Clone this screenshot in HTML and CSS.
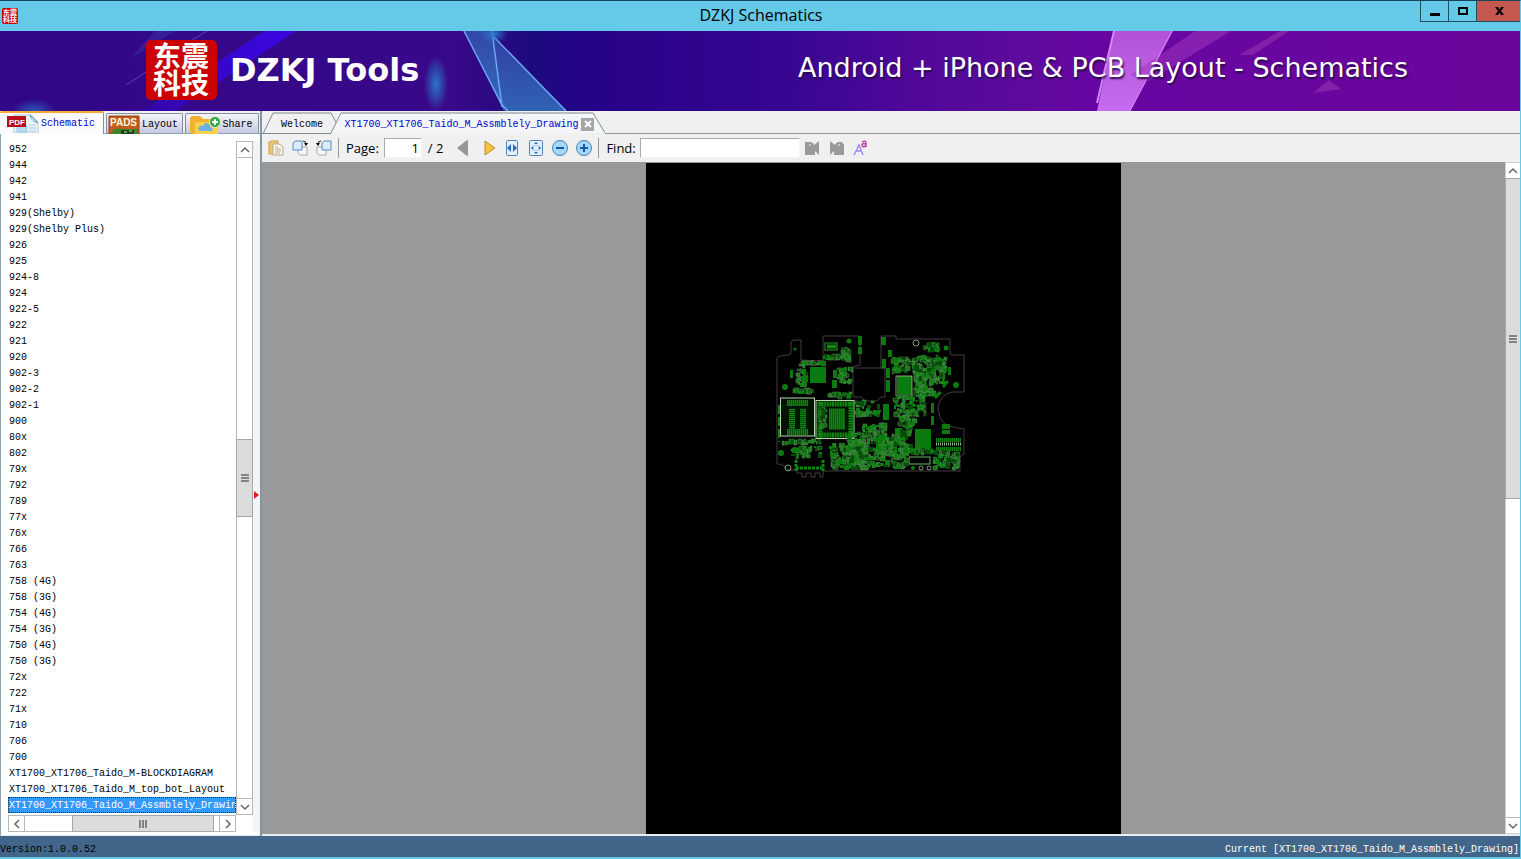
FILE: index.html
```html
<!DOCTYPE html>
<html lang="en">

<head>
    <meta charset="UTF-8">
    <meta name="viewport" content="width=device-width, initial-scale=1.0">
    <title>DZKJ Schematics</title>
    <link rel="stylesheet" href="styles.css">
</head>

<body>
    <header class="titlebar">
        <span class="seal seal-small" aria-hidden="true">东震科技</span>
        <h1>DZKJ Schematics</h1>
        <div class="window-buttons">
            <button aria-label="Minimize"><svg width="12" height="12"><path d="M1 8h10v3H1z"/></svg></button>
            <button aria-label="Maximize"><svg width="12" height="12"><path d="M2 3h8v6H2z" fill="none" stroke="#000" stroke-width="2"/></svg></button>
            <button class="close" aria-label="Close"><svg width="12" height="12"><path d="M2 2h3l1.500 2.500L8 2h3L8 6l3 4H8L6.500 7.500 5 10H2l3-4z"/></svg></button>
        </div>
    </header>

    <section class="banner">
        <svg class="banner-art" viewBox="0 0 1520 80" preserveAspectRatio="none" aria-hidden="true">
            <defs>
                <linearGradient id="sky">
                    <stop offset="0" stop-color="#300788"/>
                    <stop offset=".3" stop-color="#38098a"/>
                    <stop offset=".35" stop-color="#1c0a80"/>
                    <stop offset=".4" stop-color="#280388"/>
                    <stop offset=".52" stop-color="#370791"/>
                    <stop offset=".6" stop-color="#500899"/>
                    <stop offset=".66" stop-color="#5a0b9b"/>
                    <stop offset=".72" stop-color="#6806a2"/>
                    <stop offset="1" stop-color="#6a069b"/>
                </linearGradient>
                <linearGradient id="ray" x1="1" y1="0" x2="0" y2="1">
                    <stop offset="0" stop-color="#3a08de"/>
                    <stop offset=".6" stop-color="#3506cb"/>
                    <stop offset="1" stop-color="#3506cb" stop-opacity=".5"/>
                </linearGradient>
                <linearGradient id="glass" x1="0" y1="0" x2="0" y2="1">
                    <stop offset="0" stop-color="#3452ae"/>
                    <stop offset="1" stop-color="#367fc6"/>
                </linearGradient>
                <linearGradient id="pink" x1="0" y1="0" x2="0" y2="1">
                    <stop offset="0" stop-color="#b251d6"/>
                    <stop offset="1" stop-color="#c66cf0"/>
                </linearGradient>
                <radialGradient id="glow">
                    <stop offset="0" stop-color="#2b78c8"/>
                    <stop offset="1" stop-color="#2b78c8" stop-opacity="0"/>
                </radialGradient>
            </defs>
            <path d="M0 0h1520v80H0z" fill="url(#sky)"/>
            <path d="M265 0h31L175 80h-32z" fill="url(#ray)"/>
            <path d="M155 0h20l-45 28z" fill="#3b2aa0" opacity=".6"/>
            <path d="M207 0l-18 11M151 38l-25 16" stroke="#6a5ad0" opacity=".7"/>
            <ellipse cx="436" cy="53" rx="12" ry="28" fill="url(#glow)"/>
            <ellipse cx="34" cy="80" rx="22" ry="12" fill="url(#glow)" opacity=".7"/>
            <path d="M464 0h28l12 80z" fill="url(#glass)" opacity=".85"/>
            <path d="M493 5l74 75h-62l-4-6z" fill="url(#glass)" opacity=".75"/>
            <path d="M464 0l38 74 6 6M492 0l10 76M492 4l74 76" fill="none" stroke="#6aa5f2" stroke-width="1.500"/>
            <ellipse cx="494" cy="3" rx="14" ry="9" fill="url(#glow)"/>
            <path d="M1114 0h59l-43 80h-33z" fill="url(#pink)"/>
            <path d="M1195 0h36l-82 50-19-6 30-20z" fill="#a135bd" opacity=".55"/>
            <path d="M1280 0h9l-36 24h-14z" fill="#8f2bae" opacity=".7"/>
            <path d="M1114 0l-17 72" stroke="#d48af6" stroke-width="2"/>
            <path d="M1172 0l-42 80" stroke="#d98cf7"/>
            <path d="M1329 49l12 9-28 4z" fill="#a03cb6" opacity=".5"/>
        </svg>
        <div class="brand">
            <span class="seal">东震科技</span>
            <strong>DZKJ Tools</strong>
        </div>
        <p class="tagline">Android + iPhone &amp; PCB Layout - Schematics</p>
    </section>

    <main>
        <aside>
            <nav class="side-tabs">
                <button class="side-tab active">
                    <svg width="32" height="19" viewBox="0 0 32 19">
                        <path d="M7 1h17l7 7v11H7z" fill="#edf6fd" stroke="#a9c9e2"/>
                        <path d="M23 1q1 6 8 8z" fill="#fff" stroke="#6c9cc4"/>
                        <path d="M10 12h10v6H10zM22 11h7M22 14h7M22 17h7" fill="#b9dbf1" stroke="#9cc5e2"/>
                        <path d="M0 2h19v11H0z" fill="#b90d1e"/>
                        <text x="2" y="11" font-size="8" font-weight="bold" fill="#fff">PDF</text>
                    </svg>
                    Schematic
                </button>
                <button class="side-tab">
                    <svg width="32" height="19" viewBox="0 0 32 19">
                        <path d="M1 1h30v18H1z" fill="#c45a1d" stroke="#8e4714"/>
                        <path d="M4 19q0-7 11-5h15v5z" fill="#3b872b"/>
                        <path d="M13 15h13v4H13z" fill="#283d24"/>
                        <path d="M16 16h3v2h-3zM21 15h3v2h-3z" fill="#58a744"/>
                        <text x="2" y="11" font-size="10" font-weight="bold" fill="#fff8dc">PADS</text>
                    </svg>
                    Layout
                </button>
                <button class="side-tab">
                    <svg width="32" height="19" viewBox="0 0 32 19">
                        <path d="M1 4q0-3 3-3h7l3 3h14v15H4q-3 0-3-4z" fill="#f2b12d"/>
                        <path d="M6 7h23v12H6z" fill="#ffcf4a"/>
                        <path d="M11 16q-3-1-1-4 1-2 4-1 2-5 6-2 2 1 1 3 4 1 2 4z" fill="#6ab2e8"/>
                        <circle cx="26" cy="7" r="5.500" fill="#2faa43" stroke="#dff2d6"/>
                        <path d="M26 4v6M23 7h6" stroke="#fff" stroke-width="2"/>
                    </svg>
                    Share
                </button>
            </nav>
            <div class="side-body">
                <div class="list-wrap">
                    <ul class="files" role="listbox" aria-label="Schematic files">
                        <li>952</li>
                        <li>944</li>
                        <li>942</li>
                        <li>941</li>
                        <li>929(Shelby)</li>
                        <li>929(Shelby Plus)</li>
                        <li>926</li>
                        <li>925</li>
                        <li>924-8</li>
                        <li>924</li>
                        <li>922-5</li>
                        <li>922</li>
                        <li>921</li>
                        <li>920</li>
                        <li>902-3</li>
                        <li>902-2</li>
                        <li>902-1</li>
                        <li>900</li>
                        <li>80x</li>
                        <li>802</li>
                        <li>79x</li>
                        <li>792</li>
                        <li>789</li>
                        <li>77x</li>
                        <li>76x</li>
                        <li>766</li>
                        <li>763</li>
                        <li>758 (4G)</li>
                        <li>758 (3G)</li>
                        <li>754 (4G)</li>
                        <li>754 (3G)</li>
                        <li>750 (4G)</li>
                        <li>750 (3G)</li>
                        <li>72x</li>
                        <li>722</li>
                        <li>71x</li>
                        <li>710</li>
                        <li>706</li>
                        <li>700</li>
                        <li>XT1700_XT1706_Taido_M-BLOCKDIAGRAM</li>
                        <li>XT1700_XT1706_Taido_M_top_bot_Layout</li>
                        <li class="selected">XT1700_XT1706_Taido_M_Assmblely_Drawing</li>
                    </ul>
                    <div class="hscroll">
                        <button aria-label="Scroll left"><svg width="10" height="10"><path d="M7 1L3 5l4 4"/></svg></button>
                        <div class="track"><i class="before"></i><span class="thumb"><svg width="8" height="8"><path d="M1 0v8M4 0v8M7 0v8"/></svg></span><i class="after"></i></div>
                        <button aria-label="Scroll right"><svg width="10" height="10"><path d="M3 1l4 4-4 4"/></svg></button>
                    </div>
                </div>
                <div class="vscroll">
                    <button aria-label="Scroll up"><svg width="10" height="10"><path d="M1 7l4-4 4 4"/></svg></button>
                    <div class="track"><i class="before"></i><span class="thumb"><svg width="8" height="8"><path d="M0 1h8M0 4h8M0 7h8"/></svg></span><i class="after"></i></div>
                    <button aria-label="Scroll down"><svg width="10" height="10"><path d="M1 3l4 4 4-4"/></svg></button>
                </div>
                <div class="splitter"><svg width="5" height="8"><path d="M0 0l5 4-5 4z" fill="#d8201c"/></svg></div>
            </div>
        </aside>

        <section class="document">
            <nav class="doc-tabs">
                <svg class="tab-shapes" width="343" height="23" aria-hidden="true">
                    <path d="M1 23L11 2h58l6 11" fill="#f0f0f0" stroke="#7d8c91"/>
                    <path d="M69 22L79 2h252l12 20" fill="#f4f5f7" stroke="#7d8c91"/>
                    <path d="M0 22.500h69" stroke="#7d8c91"/>
                </svg>
                <button class="doc-tab welcome">Welcome</button>
                <button class="doc-tab current">XT1700_XT1706_Taido_M_Assmblely_Drawing</button>
                <button class="tab-close" aria-label="Close tab"><svg width="8" height="8"><path d="M1 1l6 6M7 1L1 7" stroke="#fff" stroke-width="2"/></svg></button>
                <span class="tab-rest"></span>
            </nav>

            <div class="toolbar">
                <button aria-label="Open">
                    <svg width="16" height="16">
                        <path d="M1 2l3-1h6v13H1z" fill="#edc574" stroke="#ce9d45"/>
                        <path d="M5 4h6l4 3v8H5z" fill="#fffaf0" stroke="#b5a98d"/>
                        <path d="M7 7h3M7 9h6M7 11h6M7 13h5" stroke="#b8ac8c"/>
                    </svg>
                </button>
                <button aria-label="Rotate right">
                    <svg width="16" height="16">
                        <path d="M6 7h9v8H8l-2-2z" fill="#f7f7f7" stroke="#aaa"/>
                        <path d="M1 3l2-2h7v9H1z" fill="#dcebfb" stroke="#5b8dc4"/>
                        <path d="M11 1q3 0 3 3" fill="none" stroke="#222"/><path d="M12 3h4l-2 3z"/>
                    </svg>
                </button>
                <button aria-label="Rotate left">
                    <svg width="16" height="16">
                        <path d="M1 7h9v8H3l-2-2z" fill="#f7f7f7" stroke="#aaa"/>
                        <path d="M6 3l2-2h7v9H6z" fill="#dcebfb" stroke="#5b8dc4"/>
                        <path d="M5 1Q2 1 2 4" fill="none" stroke="#222"/><path d="M0 3h4L2 6z"/>
                    </svg>
                </button>
                <span class="divider"></span>
                <label for="page">Page:</label>
                <input id="page" type="text" value="1">
                <span class="total">/ 2</span>
                <button aria-label="Previous page"><svg width="16" height="16"><path d="M13 0v16h-1L2 8l10-8z" fill="#979797"/></svg></button>
                <button class="next" aria-label="Next page"><svg width="16" height="16"><path d="M3 1l10 7-10 7z" fill="#f4c342" stroke="#bb892b"/></svg></button>
                <button aria-label="Fit width"><svg width="16" height="16"><rect x="2.500" y=".5" width="11" height="15" rx="1" fill="#e1effc" stroke="#4b83bc"/><path d="M7 4v8L3 8zM9 4v8l4-4z" fill="#2a6fb5"/></svg></button>
                <button aria-label="Fit page"><svg width="16" height="16"><rect x="1.500" y=".5" width="13" height="15" rx="1" fill="#e1effc" stroke="#4b83bc"/><path d="M6 4l2-2 2 2zM6 12l2 2 2-2zM5 6L3 8l2 2zM11 6l2 2-2 2z" fill="#2a6fb5"/><rect x="5.500" y="5.500" width="5" height="5" fill="none" stroke="#8fb2d5" stroke-dasharray="1 1"/></svg></button>
                <button aria-label="Zoom out"><svg width="16" height="16"><circle cx="8" cy="8" r="7.500" fill="#a5d7fb" stroke="#4c83b7"/><path d="M4 8h8" stroke="#155a9b" stroke-width="2"/></svg></button>
                <button aria-label="Zoom in"><svg width="16" height="16"><circle cx="8" cy="8" r="7.500" fill="#a5d7fb" stroke="#4c83b7"/><path d="M4 8h8M8 4v8" stroke="#155a9b" stroke-width="2"/></svg></button>
                <span class="divider"></span>
                <label for="find">Find:</label>
                <input id="find" type="text">
                <button class="find-prev" aria-label="Find previous"><svg width="16" height="16"><path d="M1 2h5q3 0 4 3l5-4v14l-4-4v4H1z" fill="#999"/><path d="M5 4h2v2H5z" fill="#c8c8c8"/></svg></button>
                <button aria-label="Find next"><svg width="16" height="16"><path d="M1 1l5 4q1-3 4-3h3l2 3v10H5v-4l-4 4z" fill="#999"/><path d="M9 4h2v2H9z" fill="#c8c8c8"/></svg></button>
                <button aria-label="Match case"><svg width="16" height="16"><path d="M1 15L6 5l4 10M3 11h6" fill="none" stroke="#a08af0" stroke-width="1.500"/><path d="M9 2q4-2 4 1v4M13 4q-4-1-4 1 0 3 4 1" fill="none" stroke="#bd45a6" stroke-width="1.500"/></svg></button>
            </div>

            <div class="viewer">
                <div class="canvas">
                    <svg class="sheet" viewBox="0 0 475 671">
                        <path d="M0 0h475v671H0z"/>
                        <g id="board" transform="translate(124 167)">
                            <g fill="none" stroke="#66505f" stroke-width=".7">
                                <path d="M53 31V6h37v29l-7 2v30h8l4 4h12l4-4h4V38h-4V6h15v3h54v14q0 2 3 2h11v37h-12a17 17 0 0 0-14 17q2 17 15 18l11 2v25l-4 3v14H53v6h-3v-4h-5v4h-4v-4h-5v4h-4v-4h-5v-4q-6 3-10 0-3-5-10-5V28q0-2 4-2l7-1q3 0 3-3V12q0-2 4-2h6v20z"/>
                                <path d="M85 38h30"/>
                            </g>
                            <g fill="#0b7a0f">
                                <path d="M40 37h16v16H40zM127 46h15v19h-15zM106 107h21v18h-21zM145 99h16v21h-16zM125 98h7v17h-7zM113 74h6v16h-6z"/>
                                <path d="M88 6h4v9h-4zM88 17h4v7h-4zM111 7h5v8h-5zM118 20h4v7h-4zM112 29h4v9h-4zM116 38h4v10h-4zM116 50h4v12h-4zM161 73h3v10h-3zM161 86h3v9h-3zM63 40h4v8h-4zM62 50h5v8h-5zM20 40h3v8h-3z"/>
                                <path d="M172 56l5-6 2 2-5 6zM164 67l5-6 3 2-6 6zM172 94h8v5h-8zM172 100h8v4h-8zM178 37h3v8h-3z"/>
                                <circle cx="79" cy="11" r="2.500"/><circle cx="25" cy="19" r="1.500"/><circle cx="176" cy="18" r="2.500"/><circle cx="186" cy="55" r="3"/><circle cx="11" cy="123" r="3"/><circle cx="15" cy="57" r="3"/><circle cx="143" cy="138" r="2"/>
                            </g>
                            <g fill="none" stroke="#b3d7a8">
                                <rect x="10.500" y="68" width="34" height="38" fill="#021302"/>
                                <rect x="46" y="70.500" width="38" height="38" fill="#021302"/>
                                <rect x="126" y="46" width="16" height="20" stroke-width=".7"/>
                                <rect x="55" y="13" width="12" height="7" stroke="#28a22a"/>
                                <path d="M57 16.500h9" stroke="#0d8a10" stroke-width="4"/>
                                <rect x="139" y="127" width="21" height="7" stroke="#6db567"/>
                                <circle cx="146" cy="13" r="3" stroke-width=".7"/><circle cx="18" cy="138" r="3" stroke-width=".7"/><circle cx="151" cy="138" r="2" stroke-width=".7"/><circle cx="159" cy="138" r="2" stroke-width=".7"/>
                            </g>
                            <g stroke="#0d8510" fill="none">
                                <path d="M17 73h21M22 79v20M33 79v20M17 102h21" stroke-width="6" stroke-dasharray="1.600 .4"/>
                                <path d="M49 74h34M49 105h34M50 72v36M81 72v36" stroke-width="5" stroke-dasharray="2 .6"/>
                                <path d="M59 89h16" stroke-width="21" stroke-dasharray="1.700 .3"/>
                                <path d="M26 138h26M26 130v11M53 130v11" stroke-width="3" stroke-dasharray="3 1"/>
                                <path d="M166 110h25M166 119h25" stroke-width="4" stroke-dasharray="1.500 .5"/>
                                <path d="M166 114h25" stroke="#8db886" stroke-width="3" stroke-dasharray="1 1"/>
                                <path d="M9 75v37" stroke-width="2" stroke-dasharray="9 3"/>
                            </g>
                        </g>
                    </svg>
                </div>
                <div class="vscroll viewer-scroll">
                    <button aria-label="Scroll page up"><svg width="10" height="10"><path d="M1 7l4-4 4 4"/></svg></button>
                    <div class="track"><span class="thumb"><svg width="8" height="8"><path d="M0 1h8M0 4h8M0 7h8"/></svg></span><i class="after"></i></div>
                    <button aria-label="Scroll page down"><svg width="10" height="10"><path d="M1 3l4 4 4-4"/></svg></button>
                </div>
            </div>
        </section>
    </main>

    <footer>
        <span>Version:1.0.0.52</span>
        <span class="current-file">Current [XT1700_XT1706_Taido_M_Assmblely_Drawing]</span>
    </footer>

    <script src="board.js"></script>
</body>

</html>
```
FILE: board.js
```js
// small parts of the board: x, y, width, height, number of parts
let clusters = [
    [26, 34, 13, 24, 30],
    [22, 58, 26, 7, 20],
    [28, 31, 30, 5, 14],
    [53, 24, 28, 7, 26],
    [71, 17, 11, 18, 22],
    [67, 37, 17, 18, 22],
    [58, 62, 26, 8, 20],
    [85, 70, 28, 18, 36],
    [48, 76, 10, 26, 26],
    [12, 109, 40, 7, 26],
    [20, 116, 34, 14, 36],
    [59, 113, 40, 28, 130],
    [77, 102, 20, 34, 66],
    [92, 92, 26, 16, 40],
    [94, 104, 46, 36, 140],
    [130, 95, 14, 30, 34],
    [121, 27, 21, 18, 34],
    [142, 25, 36, 30, 130],
    [143, 38, 24, 30, 80],
    [123, 66, 34, 22, 84],
    [128, 80, 20, 18, 36],
    [153, 12, 18, 11, 22],
    [163, 120, 28, 21, 66],
    [138, 118, 26, 8, 22]
]

let board = document.getElementById('board')
let seed = 1706

function random() {
    seed = (seed * 16807) % 2147483647
    return seed / 2147483647
}

function part(x, y, w, h, outlined) {
    let rect = document.createElementNS('http://www.w3.org/2000/svg', 'rect')
    rect.setAttribute('x', x)
    rect.setAttribute('y', y)
    rect.setAttribute('width', w)
    rect.setAttribute('height', h)
    rect.setAttribute('fill', random() > 0.4 ? '#0b7a0f' : '#064d09')
    if (outlined) {
        rect.setAttribute('stroke', '#6f9a6a')
        rect.setAttribute('stroke-width', 0.4)
    }
    board.appendChild(rect)
}

clusters.forEach(function (c) {
    for (let i = 0; i < c[4]; i++) {
        let w = 2 + Math.floor(random() * 4)
        let h = 2 + Math.floor(random() * 4)
        let x = c[0] + Math.floor(random() * (c[2] - w))
        let y = c[1] + Math.floor(random() * Math.max(1, c[3] - h))
        part(x, y, w, h, random() > 0.55)
    }
})
```
FILE: styles.css
```css
* {
    padding: 0;
    margin: 0;
    box-sizing: border-box;
}

body {
    height: 100vh;
    display: flex;
    flex-direction: column;
    overflow: hidden;
    background: #f0f0f0;
    border-top: 1px solid #17455c;
    border-right: 1px solid #65c9e8;
    border-bottom: 2px solid #65c9e8;
    font-family: "Liberation Mono", monospace;
    font-size: 10px;
    color: black;
}

button {
    background: none;
    border: none;
    font: inherit;
    color: inherit;
    display: flex;
    align-items: center;
    justify-content: center;
}

svg {
    display: block;
    flex-shrink: 0;
}

/* title bar */
.titlebar {
    height: 30px;
    flex-shrink: 0;
    background: #65c9e8;
    display: grid;
    grid-template-columns: 1fr auto 1fr;
    align-items: center;
    padding-left: 2px;
}

.titlebar h1 {
    font: 16px/28px "Open Sans", sans-serif;
    align-self: start;
}

.seal {
    width: 71px;
    height: 60px;
    padding: 2px 7px;
    border-radius: 5px;
    background: #cc0203;
    color: white;
    font: bold 28px/27px "Noto Sans CJK SC", sans-serif;
    word-break: break-all;
}

.seal-small {
    width: 16px;
    height: 16px;
    padding: 1px;
    border-radius: 2px;
    font-size: 7px;
    line-height: 7px;
}

.window-buttons {
    display: flex;
    align-self: start;
    justify-self: end;
}

.window-buttons button {
    width: 28px;
    height: 21px;
    border: 1px solid #1d4d60;
    border-top: none;
    border-right: none;
}

.window-buttons .close {
    width: 44px;
    background: #c6594f;
}

/* banner */
.banner {
    height: 80px;
    flex-shrink: 0;
    position: relative;
    display: flex;
    align-items: center;
    justify-content: space-between;
    padding: 0 112px 2px 146px;
    color: white;
}

.banner-art {
    position: absolute;
    inset: 0;
    width: 100%;
    height: 100%;
}

.brand {
    position: relative;
    display: flex;
    align-items: center;
    gap: 13px;
}

.brand strong {
    font: bold 32px "DejaVu Sans", sans-serif;
}

.tagline {
    position: relative;
    padding-bottom: 6px;
    font: 27px "DejaVu Sans", sans-serif;
    text-shadow: 1px 2px 2px #28084a;
}

main {
    flex: 1;
    min-height: 0;
    display: flex;
}

/* left side */
aside {
    width: 262px;
    flex-shrink: 0;
    display: flex;
    flex-direction: column;
    border-right: 2px solid #8295a0;
}

.side-tabs {
    height: 23px;
    display: flex;
    align-items: flex-end;
    gap: 2px;
    border-bottom: 1px solid #8ea3ae;
    padding-right: 1px;
}

.side-tab {
    height: 20px;
    gap: 2px;
    padding: 1px 4px 0 1px;
    background: linear-gradient(#f4f4fa, #c6c9e4);
    border: 1px solid #8190a0;
    border-bottom: none;
    border-radius: 2px 2px 0 0;
    flex: 1;
}

.side-tab.active {
    flex: 0 0 104px;
    height: 23px;
    margin-bottom: -1px;
    padding: 0 7px 0 6px;
    background: #fcfcfe;
    border-top: 2px solid #f7a938;
    border-left: none;
    color: #0000d0;
}

.side-tab text {
    font-family: "Liberation Sans", sans-serif;
}

.side-body {
    flex: 1;
    min-height: 0;
    display: flex;
    padding: 7px 0 3px 7px;
    background: white;
    border-left: 1px solid #8ea3ae;
    border-bottom: 1px solid #dfe9ef;
}

.list-wrap {
    flex: 1;
    min-width: 0;
    display: flex;
    flex-direction: column;
}

.files {
    flex: 1;
    min-height: 0;
    list-style: none;
    overflow: hidden;
}

.files li {
    height: 16px;
    line-height: 16px;
    padding: 1px 0 0 1px;
    white-space: nowrap;
    overflow: hidden;
}

.files .selected {
    background: #3399ff;
    color: white;
    outline: 1px dotted #2b2b1c;
    outline-offset: -1px;
}

/* scroll bars */
.vscroll {
    width: 17px;
    display: flex;
    flex-direction: column;
    border: 1px solid #b8b8b8;
    background: white;
}

.side-body .vscroll {
    margin-bottom: 17px;
}

.hscroll {
    height: 17px;
    display: flex;
    border: 1px solid #b8b8b8;
    background: white;
}

.vscroll button {
    height: 16px;
    border-bottom: 1px solid #b8b8b8;
}

.vscroll button:last-child {
    border-top: 1px solid #b8b8b8;
    border-bottom: none;
}

.hscroll button {
    width: 16px;
    border-right: 1px solid #b8b8b8;
}

.hscroll button:last-child {
    border-left: 1px solid #b8b8b8;
    border-right: none;
}

.vscroll svg,
.hscroll svg {
    fill: none;
    stroke: #666;
    stroke-width: 1.5;
}

.track {
    flex: 1;
    display: flex;
}

.vscroll .track {
    flex-direction: column;
}

.thumb {
    flex: 77;
    display: flex;
    align-items: center;
    justify-content: center;
    background: #dcdcdc;
    outline: 1px solid #a6a6a6;
}

.vscroll .before,
.vscroll .after {
    flex: 282;
}

.hscroll .thumb {
    flex: 140;
}

.hscroll .before {
    flex: 48;
}

.hscroll .after {
    flex: 6;
}

.splitter {
    width: 7px;
    display: flex;
    align-items: center;
    justify-content: center;
    background: #f2f4f6;
    padding-top: 16px;
}

/* document side */
.document {
    flex: 1;
    min-width: 0;
    display: flex;
    flex-direction: column;
}

.doc-tabs {
    height: 23px;
    flex-shrink: 0;
    position: relative;
    display: flex;
    align-items: center;
}

.tab-shapes {
    position: absolute;
    left: 0;
    top: 0;
}

.doc-tab {
    position: relative;
    height: 23px;
    padding-top: 3px;
}

.welcome {
    width: 80px;
}

.current {
    width: 239px;
    color: #0000d0;
}

.tab-close {
    position: relative;
    width: 13px;
    height: 13px;
    margin-top: 3px;
    background: #a5a5a5;
}

.tab-rest {
    flex: 1;
    align-self: stretch;
    margin-left: 11px;
    border-bottom: 1px solid #8b9a9e;
}

.toolbar {
    height: 28px;
    flex-shrink: 0;
    display: flex;
    align-items: center;
    gap: 8px;
    padding-left: 6px;
    font: 13px "Open Sans", sans-serif;
}

.toolbar input {
    height: 20px;
    border: 1px solid #aaa;
    border-right-color: #f4f4f4;
    border-bottom-color: #f4f4f4;
    background: white;
    font: inherit;
}

.toolbar .divider {
    width: 1px;
    height: 20px;
    margin: 0 -1px 0 -2px;
    background: #999;
}

#page {
    width: 38px;
    padding-right: 2px;
    text-align: right;
    margin-left: -3px;
}

.total {
    margin-left: -2px;
    margin-right: 4px;
}

.toolbar .next {
    margin: 0 -2px 0 3px;
}

#find {
    width: 160px;
    margin-left: -4px;
}

.find-prev {
    margin: 0 1px 0 -4px;
}

.viewer {
    flex: 1;
    min-height: 0;
    display: flex;
    border-bottom: 2px solid #e9eef0;
}

.canvas {
    flex: 1;
    min-width: 0;
    padding-top: 1px;
    display: flex;
    justify-content: center;
    overflow: hidden;
    background: #999;
}

.sheet {
    height: 100%;
}

.viewer-scroll {
    width: 15px;
    border: 1px solid #d0d0d0;
    border-right: none;
}

.viewer-scroll .thumb {
    flex: 1;
}

.viewer-scroll .after {
    flex: 1;
}

footer {
    height: 21px;
    flex-shrink: 0;
    display: flex;
    align-items: center;
    justify-content: space-between;
    padding: 6px 1px 0 0;
    background: #41668a;
}

.current-file {
    color: white;
}
```
